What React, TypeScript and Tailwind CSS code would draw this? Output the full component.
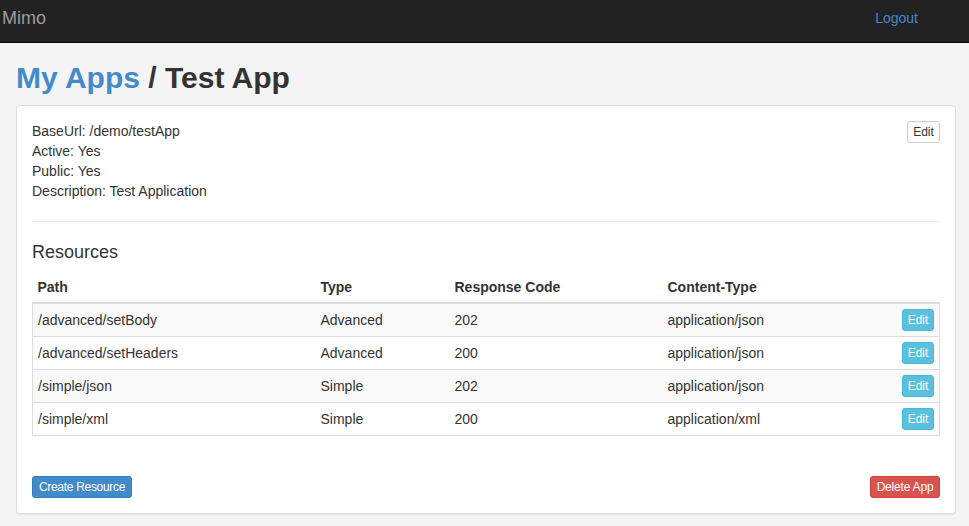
const resources = [
  { path: "/advanced/setBody", type: "Advanced", code: "202", contentType: "application/json" },
  { path: "/advanced/setHeaders", type: "Advanced", code: "200", contentType: "application/json" },
  { path: "/simple/json", type: "Simple", code: "202", contentType: "application/json" },
  { path: "/simple/xml", type: "Simple", code: "200", contentType: "application/xml" },
];

function Navbar() {
  return (
    <div className="flex h-[43px] items-start justify-between border-b border-[#080808] bg-[#222222]">
      <span className="pl-[2px] pt-[7px] text-[18px] leading-[22px] text-[#9d9d9d]">Mimo</span>
      <a className="pr-[51px] pt-[8px] text-[14px] leading-[20px] text-[#428bca]">Logout</a>
    </div>
  );
}

export default function App() {
  return (
    <div className="min-h-[526px] bg-[#f4f4f4] font-['Liberation_Sans',Arial,sans-serif] text-[14px] leading-[20px] text-[#333333]">
      <Navbar />
      <div className="pl-4 pr-[13px]">
        <h1 className="mb-[11px] pt-[18px] text-[30px] font-bold leading-[33px]">
          <span className="text-[#428bca]">My Apps</span> / Test App
        </h1>

        <div className="rounded border border-[#dddddd] bg-white p-[15px] shadow-[0_1px_1px_rgba(0,0,0,0.05)]">
          <div className="flex items-start justify-between">
            <div>
              <div>BaseUrl: /demo/testApp</div>
              <div>Active: Yes</div>
              <div>Public: Yes</div>
              <div>Description: Test Application</div>
            </div>
            <button
              type="button"
              className="h-[22px] w-[33px] rounded-[3px] border border-[#cccccc] bg-white text-[12px] leading-[18px] text-[#333333]"
            >
              Edit
            </button>
          </div>

          <hr className="my-5 border-t border-[#eeeeee]" />

          <h4 className="mb-[10px] text-[18px] font-medium leading-[20px]">Resources</h4>

          <table className="mb-5 w-full table-fixed border-collapse">
            <colgroup>
              <col className="w-[283px]" />
              <col className="w-[134px]" />
              <col className="w-[213px]" />
              <col />
              <col className="w-[44px]" />
            </colgroup>
            <thead>
              <tr className="border-b-2 border-[#dddddd] text-left">
                <th className="px-[5px] py-[5px] font-bold">Path</th>
                <th className="px-[5px] py-[5px] font-bold">Type</th>
                <th className="px-[5px] py-[5px] font-bold">Response Code</th>
                <th className="px-[5px] py-[5px] font-bold">Content-Type</th>
                <th />
              </tr>
            </thead>
            <tbody className="border border-[#dddddd]">
              {resources.map((r, i) => (
                <tr
                  key={r.path}
                  className={`border-t border-[#dddddd] ${i % 2 === 0 ? "bg-[#f9f9f9]" : "bg-white"}`}
                >
                  <td className="px-[5px] py-[5px]">{r.path}</td>
                  <td className="px-[5px] py-[5px]">{r.type}</td>
                  <td className="px-[5px] py-[5px]">{r.code}</td>
                  <td className="px-[5px] py-[5px]">{r.contentType}</td>
                  <td className="py-[5px] pr-[5px] text-right">
                    <button
                      type="button"
                      className="h-[22px] w-[32px] rounded-[3px] border border-[#46b8da] bg-[#5bc0de] text-[12px] leading-[18px] text-white"
                    >
                      Edit
                    </button>
                  </td>
                </tr>
              ))}
            </tbody>
          </table>

          <div className="flex justify-between pt-5">
            <button
              type="button"
              className="h-[22px] w-[100px] rounded-[3px] border border-[#357ebd] bg-[#428bca] text-[12px] leading-[18px] tracking-[-0.3px] text-white"
            >
              Create Resource
            </button>
            <button
              type="button"
              className="h-[22px] w-[70px] rounded-[3px] border border-[#d43f3a] bg-[#d9534f] text-[12px] leading-[18px] tracking-[-0.2px] text-white"
            >
              Delete App
            </button>
          </div>
        </div>
      </div>
    </div>
  );
}
